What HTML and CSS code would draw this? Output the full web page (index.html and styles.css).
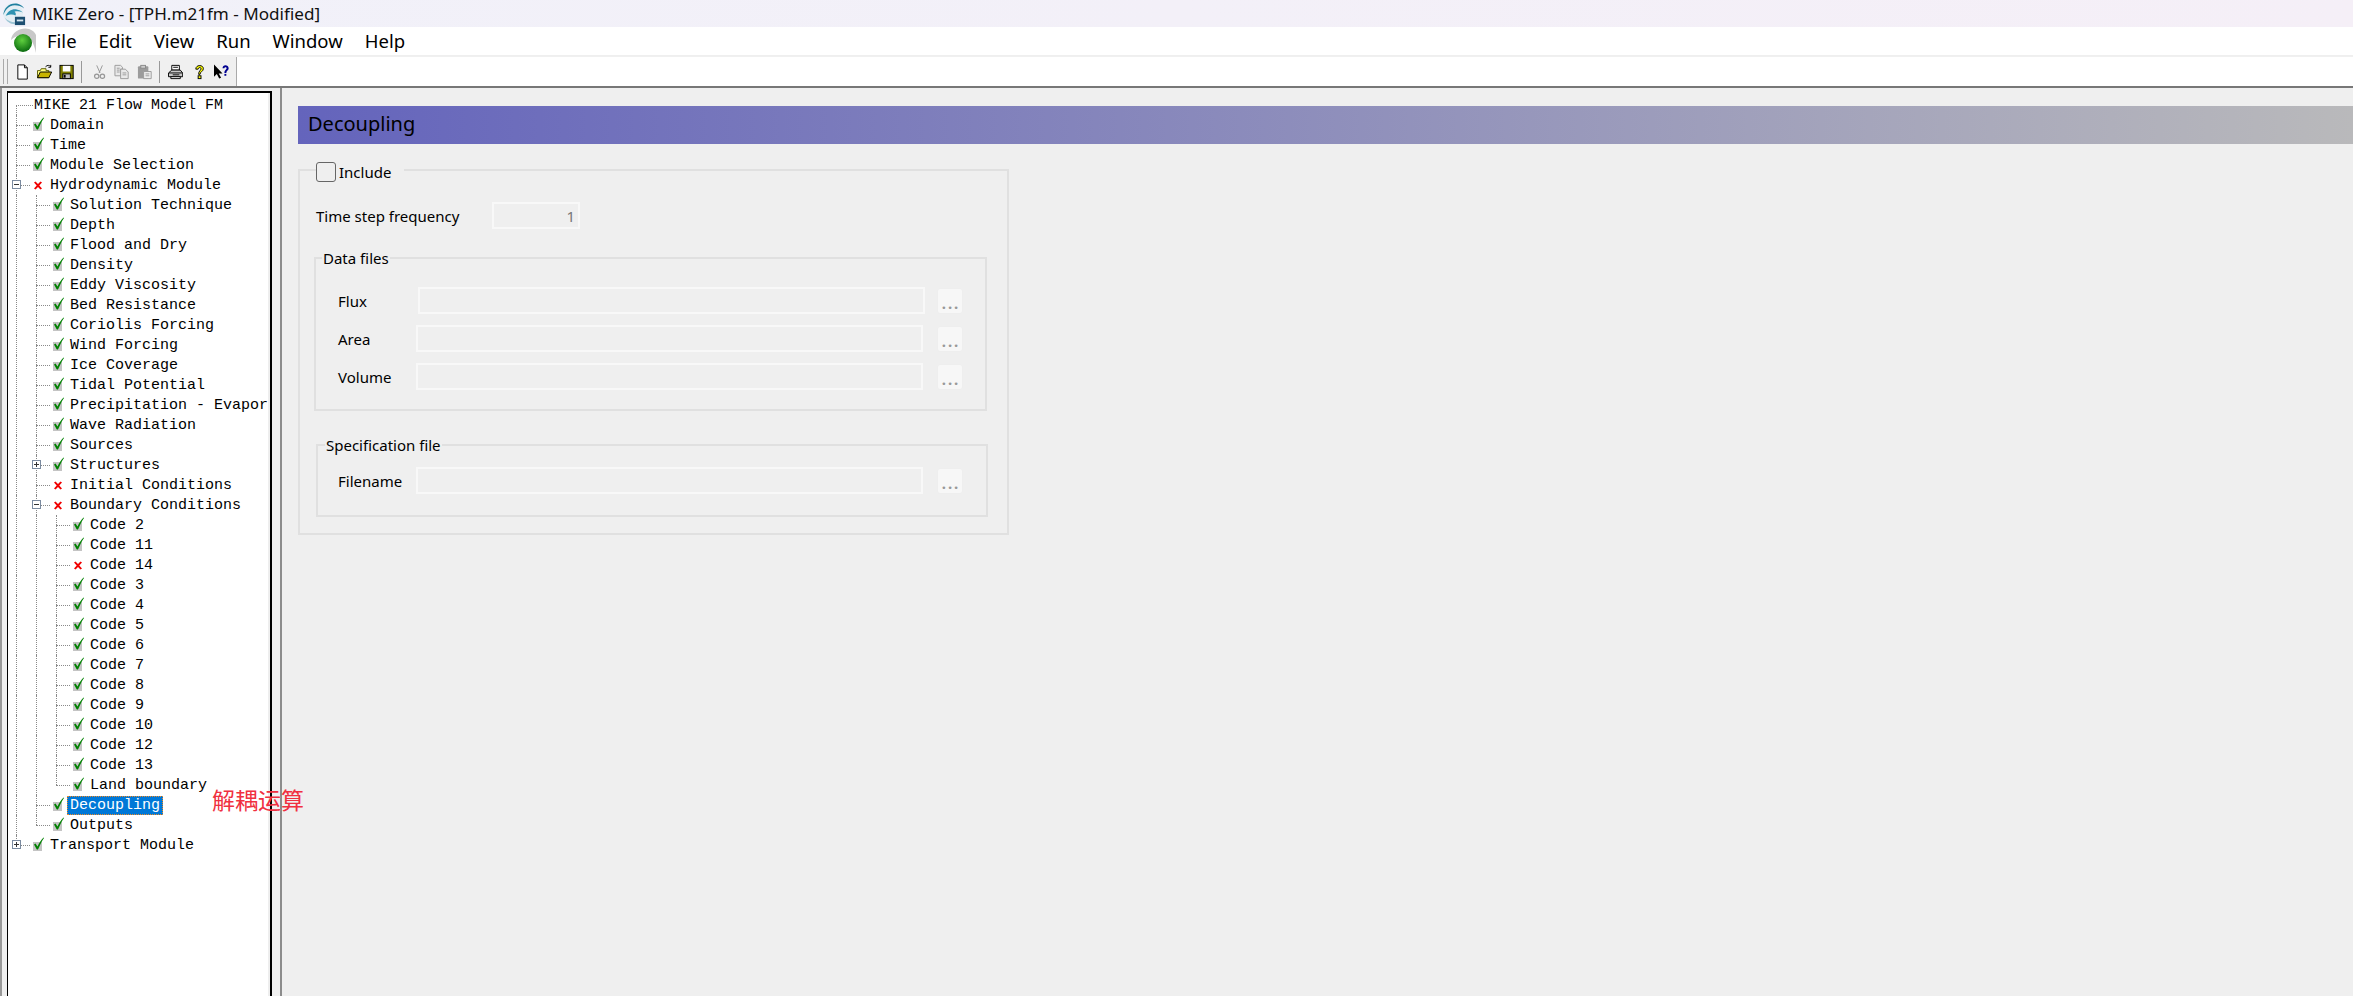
FILE: index.html
```html
<!DOCTYPE html>
<html lang="en">
<head>
    <meta charset="UTF-8">
    <title>MIKE Zero - [TPH.m21fm - Modified]</title>
    <link rel="stylesheet" href="styles.css">
</head>
<body>
    <svg class="defs" width="0" height="0">
        <symbol id="ok" viewBox="0 0 14 14">
            <rect x="0" y="5" width="9" height="9" fill="#c4c4c4"/>
            <path d="M1 7.500l1.500-1 2 3C6 6 8 3 10.500 .5l.5 .6C9 4 7 8 5 12.500H3.800z" fill="#008000"/>
        </symbol>
        <symbol id="bad" viewBox="0 0 14 14">
            <path d="M1 5l1.500-1 2.500 2.500L7.500 4 9 5 6.300 8 9 11l-1.500 1L5 9.500 2.500 12 1 11l2.700-3z" fill="#f00000" transform="translate(0 .6)"/>
        </symbol>
    </svg>
    <div class="app">
        <div class="titlebar">
            <svg class="app-logo" viewBox="0 0 26 26">
                <circle cx="12" cy="12" r="11" fill="#e4eef4"/>
                <path d="M1.500 14C2 6 9 .500 17 2c3 .6 5.500 2.500 7 5-4-3-10-4.500-15-2.500C5.500 6 3 10 1.500 14z" fill="#1f7f9f"/>
                <path d="M4 15c2-5 7-8 12-7 2.500 .5 5 1.500 6.500 3.500-3-1.500-6-2-9-1 1.500 1 2 2.500 1 4-2-1.500-6-1.500-10.500 .5z" fill="#2e92b2"/>
                <path d="M3 17c3 3 7 5 11 5v2C9 24 5 21 3 17z" fill="#9cc4d4"/>
                <rect x="14" y="16" width="11" height="9" fill="#1d4f72"/>
                <rect x="16" y="19" width="7" height="2" fill="#d8e6ee"/>
            </svg>
            <span>MIKE Zero - [TPH.m21fm - Modified]</span>
        </div>
        <div class="menubar">
            <svg class="menu-logo" viewBox="0 0 26 26">
                <defs>
                    <radialGradient id="ball" cx="45%" cy="35%" r="65%">
                        <stop offset="0" stop-color="#5fd03f"/>
                        <stop offset="1" stop-color="#0b6b10"/>
                    </radialGradient>
                </defs>
                <path d="M1 13C2 4 12 0 19 2c3 1 6 3 7 6v18c-2-10-6-18-14-18-4 0-8 2-11 5z" fill="#c8c8c8"/>
                <circle cx="13" cy="16" r="9" fill="url(#ball)"/>
            </svg>
            <span>File</span>
            <span>Edit</span>
            <span>View</span>
            <span>Run</span>
            <span>Window</span>
            <span>Help</span>
        </div>
        <div class="toolbar-row">
            <div class="toolbar">
                <span class="grip"></span>
                <svg class="tool" viewBox="0 0 16 16"><path d="M3 .5h7l3 3v12H3z" fill="#fff" stroke="#000"/><path d="M10 .5v3h3" fill="none" stroke="#000"/></svg>
                <svg class="tool" viewBox="0 0 16 16"><path d="M.5 6.500h3l1-2h5v2h3V14H.5z" fill="#ffff80" stroke="#5a5a00"/><path d="M.5 14l3-6h12l-3 6z" fill="#c8b400" stroke="#000"/><path d="M9 2.500c2-2 4-2 5.500 0M14.500 .5v2.500h-2.500" fill="none" stroke="#000"/></svg>
                <svg class="tool" viewBox="0 0 16 16"><rect x="1" y="1" width="14" height="14" fill="#808000" stroke="#000"/><rect x="4" y="1.500" width="8" height="6" fill="#fff"/><rect x="4" y="10" width="8" height="5" fill="#c0c0c0" stroke="#000"/><rect x="5" y="11" width="2" height="3" fill="#000"/></svg>
                <span class="sep"></span>
                <svg class="tool dim" viewBox="0 0 16 16"><path d="M5 1l3.500 8M11 1L7.500 9" fill="none" stroke="#888"/><circle cx="5" cy="12.500" r="2.300" fill="none" stroke="#888" stroke-width="1.300"/><circle cx="11" cy="12.500" r="2.300" fill="none" stroke="#888" stroke-width="1.300"/></svg>
                <svg class="tool dim" viewBox="0 0 16 16"><path d="M1 1h6l2 2v2h-2v7H1z" fill="#e8e8e8" stroke="#8e8e8e"/><path d="M7 5h5l3 3v7H7z" fill="#e8e8e8" stroke="#8e8e8e"/><path d="M9 9h4M9 11h4M3 4h3M3 6h3M3 8h3" stroke="#8e8e8e"/></svg>
                <svg class="tool dim" viewBox="0 0 16 16"><rect x="1" y="2" width="11" height="13" rx="1" fill="#8e8e8e"/><rect x="4" y="1" width="5" height="3" fill="#c8c8c8" stroke="#777"/><path d="M7 7.500h8V15H7z" fill="#eee" stroke="#8e8e8e"/><path d="M9 10h4M9 12h4" stroke="#8e8e8e"/></svg>
                <span class="sep narrow"></span>
                <svg class="tool wide" viewBox="0 0 16 16"><path d="M4 1h8v5H4z" fill="#fff" stroke="#000"/><path d="M.5 9L4 6h9l2.500 3v4h-15z" fill="#c8c8c8" stroke="#000"/><path d="M1 9h14" stroke="#000"/><path d="M3 13h10v2H3zM5.500 3h5M5 11h7" fill="#fff" stroke="#000"/></svg>
                <svg class="tool" viewBox="0 0 16 16"><path d="M4 5c0-5 8-5 8-.5 0 3-3.500 3-3.500 6H7c0-4 2.500-4 2.500-6 0-1.800-3-1.500-3 .5z" fill="#ffff00" stroke="#000"/><rect x="6.500" y="12" width="3" height="3" fill="#ffff00" stroke="#000"/></svg>
                <svg class="tool" viewBox="0 0 16 16"><path d="M0 0v13l3-3 2.500 5 2-1-2.500-4.500H9z" fill="#000"/><path d="M9 4c0-4.500 6.500-4 6.500 0 0 2.500-2.500 2.500-2.500 5h-2c0-3.500 2.300-3.500 2.300-5 0-1.500-2.300-1.500-2.300 0z" fill="#000090"/><rect x="11" y="10" width="2" height="2" fill="#000090"/></svg>
            </div>
        </div>
        <div class="workspace">
            <div class="tree-pane">
                <div class="tree">
                    <div class="row"><span class="branch first"></span><span class="label root">MIKE 21 Flow Model FM</span></div>
                    <div class="row"><span class="branch"></span><svg class="state"><use href="#ok"/></svg><span class="label">Domain</span></div>
                    <div class="row"><span class="branch"></span><svg class="state"><use href="#ok"/></svg><span class="label">Time</span></div>
                    <div class="row"><span class="branch"></span><svg class="state"><use href="#ok"/></svg><span class="label">Module Selection</span></div>
                    <div class="row"><span class="branch"><span class="toggle minus"></span></span><svg class="state"><use href="#bad"/></svg><span class="label">Hydrodynamic Module</span></div>
                    <div class="row"><span class="pipe"></span><span class="branch"></span><svg class="state"><use href="#ok"/></svg><span class="label">Solution Technique</span></div>
                    <div class="row"><span class="pipe"></span><span class="branch"></span><svg class="state"><use href="#ok"/></svg><span class="label">Depth</span></div>
                    <div class="row"><span class="pipe"></span><span class="branch"></span><svg class="state"><use href="#ok"/></svg><span class="label">Flood and Dry</span></div>
                    <div class="row"><span class="pipe"></span><span class="branch"></span><svg class="state"><use href="#ok"/></svg><span class="label">Density</span></div>
                    <div class="row"><span class="pipe"></span><span class="branch"></span><svg class="state"><use href="#ok"/></svg><span class="label">Eddy Viscosity</span></div>
                    <div class="row"><span class="pipe"></span><span class="branch"></span><svg class="state"><use href="#ok"/></svg><span class="label">Bed Resistance</span></div>
                    <div class="row"><span class="pipe"></span><span class="branch"></span><svg class="state"><use href="#ok"/></svg><span class="label">Coriolis Forcing</span></div>
                    <div class="row"><span class="pipe"></span><span class="branch"></span><svg class="state"><use href="#ok"/></svg><span class="label">Wind Forcing</span></div>
                    <div class="row"><span class="pipe"></span><span class="branch"></span><svg class="state"><use href="#ok"/></svg><span class="label">Ice Coverage</span></div>
                    <div class="row"><span class="pipe"></span><span class="branch"></span><svg class="state"><use href="#ok"/></svg><span class="label">Tidal Potential</span></div>
                    <div class="row"><span class="pipe"></span><span class="branch"></span><svg class="state"><use href="#ok"/></svg><span class="label">Precipitation - Evapor</span></div>
                    <div class="row"><span class="pipe"></span><span class="branch"></span><svg class="state"><use href="#ok"/></svg><span class="label">Wave Radiation</span></div>
                    <div class="row"><span class="pipe"></span><span class="branch"></span><svg class="state"><use href="#ok"/></svg><span class="label">Sources</span></div>
                    <div class="row"><span class="pipe"></span><span class="branch"><span class="toggle plus"></span></span><svg class="state"><use href="#ok"/></svg><span class="label">Structures</span></div>
                    <div class="row"><span class="pipe"></span><span class="branch"></span><svg class="state"><use href="#bad"/></svg><span class="label">Initial Conditions</span></div>
                    <div class="row"><span class="pipe"></span><span class="branch"><span class="toggle minus"></span></span><svg class="state"><use href="#bad"/></svg><span class="label">Boundary Conditions</span></div>
                    <div class="row"><span class="pipe"></span><span class="pipe"></span><span class="branch"></span><svg class="state"><use href="#ok"/></svg><span class="label">Code 2</span></div>
                    <div class="row"><span class="pipe"></span><span class="pipe"></span><span class="branch"></span><svg class="state"><use href="#ok"/></svg><span class="label">Code 11</span></div>
                    <div class="row"><span class="pipe"></span><span class="pipe"></span><span class="branch"></span><svg class="state"><use href="#bad"/></svg><span class="label">Code 14</span></div>
                    <div class="row"><span class="pipe"></span><span class="pipe"></span><span class="branch"></span><svg class="state"><use href="#ok"/></svg><span class="label">Code 3</span></div>
                    <div class="row"><span class="pipe"></span><span class="pipe"></span><span class="branch"></span><svg class="state"><use href="#ok"/></svg><span class="label">Code 4</span></div>
                    <div class="row"><span class="pipe"></span><span class="pipe"></span><span class="branch"></span><svg class="state"><use href="#ok"/></svg><span class="label">Code 5</span></div>
                    <div class="row"><span class="pipe"></span><span class="pipe"></span><span class="branch"></span><svg class="state"><use href="#ok"/></svg><span class="label">Code 6</span></div>
                    <div class="row"><span class="pipe"></span><span class="pipe"></span><span class="branch"></span><svg class="state"><use href="#ok"/></svg><span class="label">Code 7</span></div>
                    <div class="row"><span class="pipe"></span><span class="pipe"></span><span class="branch"></span><svg class="state"><use href="#ok"/></svg><span class="label">Code 8</span></div>
                    <div class="row"><span class="pipe"></span><span class="pipe"></span><span class="branch"></span><svg class="state"><use href="#ok"/></svg><span class="label">Code 9</span></div>
                    <div class="row"><span class="pipe"></span><span class="pipe"></span><span class="branch"></span><svg class="state"><use href="#ok"/></svg><span class="label">Code 10</span></div>
                    <div class="row"><span class="pipe"></span><span class="pipe"></span><span class="branch"></span><svg class="state"><use href="#ok"/></svg><span class="label">Code 12</span></div>
                    <div class="row"><span class="pipe"></span><span class="pipe"></span><span class="branch"></span><svg class="state"><use href="#ok"/></svg><span class="label">Code 13</span></div>
                    <div class="row"><span class="pipe"></span><span class="pipe"></span><span class="branch last"></span><svg class="state"><use href="#ok"/></svg><span class="label">Land boundary</span></div>
                    <div class="row"><span class="pipe"></span><span class="branch"></span><svg class="state"><use href="#ok"/></svg><span class="label selected">Decoupling</span><span class="note">解耦运算</span></div>
                    <div class="row"><span class="pipe"></span><span class="branch last"></span><svg class="state"><use href="#ok"/></svg><span class="label">Outputs</span></div>
                    <div class="row"><span class="branch last"><span class="toggle plus"></span></span><svg class="state"><use href="#ok"/></svg><span class="label">Transport Module</span></div>
                </div>
            </div>
            <div class="main">
                <div class="page-title">Decoupling</div>
                <fieldset class="group outer">
                    <legend class="include"><input type="checkbox" class="check"><span>Include</span></legend>
                    <div class="freq-row">
                        <label>Time step frequency</label>
                        <input class="field number" value="1" disabled>
                    </div>
                    <fieldset class="group data-files">
                        <legend>Data files</legend>
                        <div class="file-row">
                            <label>Flux</label>
                            <input class="field nudge" disabled>
                            <button class="browse" disabled>...</button>
                        </div>
                        <div class="file-row">
                            <label>Area</label>
                            <input class="field" disabled>
                            <button class="browse" disabled>...</button>
                        </div>
                        <div class="file-row">
                            <label>Volume</label>
                            <input class="field" disabled>
                            <button class="browse" disabled>...</button>
                        </div>
                    </fieldset>
                    <fieldset class="group spec-file">
                        <legend>Specification file</legend>
                        <div class="file-row">
                            <label>Filename</label>
                            <input class="field" disabled>
                            <button class="browse" disabled>...</button>
                        </div>
                    </fieldset>
                </fieldset>
            </div>
        </div>
    </div>
</body>
</html>
```

FILE: styles.css
```css
* {
    box-sizing: border-box;
}
body {
    margin: 0;
    font-family: "Noto Sans", sans-serif;
    background-color: #efefef;
    color: #000;
    overflow: hidden;
}
.defs {
    display: block;
    height: 0;
}
.app {
    display: flex;
    flex-direction: column;
    height: 100vh;
}

/* window chrome */
.titlebar {
    display: flex;
    align-items: center;
    gap: 6px;
    height: 27px;
    padding-left: 2px;
    font-size: 17.1px;
    color: #111;
    background: linear-gradient(to right, #f1f1f9, #f5eff7);
}
.app-logo {
    width: 24px;
    height: 24px;
}
.menubar {
    display: flex;
    align-items: center;
    gap: 22px;
    height: 28px;
    padding: 0 0 2px 10px;
    font-size: 18.5px;
    background: white;
}
.menu-logo {
    width: 26px;
    height: 26px;
    margin-right: -11px;
}
.toolbar-row {
    height: 31px;
    margin-top: 2px;
    background: white;
    border-bottom: 2px solid #777;
    box-shadow: 0 -1px 0 #f0f0f0;
}
.toolbar {
    display: flex;
    align-items: center;
    width: 237px;
    height: 29px;
    padding-left: 3px;
    background: #f0f0f0;
    border-right: 1px solid #aaa;
}
.grip {
    width: 5px;
    height: 25px;
    margin-right: 7px;
    border-left: 1px solid #aaa;
    border-right: 1px solid #aaa;
}
.tool {
    width: 16px;
    height: 16px;
    margin-right: 7px;
}
.tool.wide {
    margin-right: 9px;
}
.dim {
    opacity: .85;
}
.sep {
    width: 1px;
    height: 22px;
    margin-right: 10px;
    background: #999;
}
.sep.narrow {
    margin-right: 8px;
}

/* tree */
.workspace {
    flex: 1;
    display: flex;
    min-height: 0;
}
.tree-pane {
    width: 280px;
    padding: 3px 8px 0 7px;
    background: #f0f0f0;
    box-shadow: inset 2px 0 0 #999;
}
.tree {
    height: 100%;
    padding: 2px 0 0 8px;
    background: white;
    border: solid #000;
    border-width: 2px 2px 0 1px;
    box-shadow: inset -2px 0 0 #eee;
    font-family: "Liberation Mono", monospace;
    font-size: 15px;
}
.row {
    position: relative;
    display: flex;
    align-items: center;
    height: 20px;
    white-space: nowrap;
}
.pipe {
    width: 20px;
    height: 20px;
    flex: none;
    border-left: 1px dotted #8a8a8a;
}
.branch {
    position: relative;
    width: 17px;
    height: 20px;
    flex: none;
}
.branch::before {
    content: "";
    position: absolute;
    left: 0;
    top: 0;
    height: 100%;
    border-left: 1px dotted #8a8a8a;
}
.branch.first::before {
    top: 50%;
    height: 50%;
}
.branch.last::before {
    height: 50%;
}
.branch::after {
    content: "";
    position: absolute;
    left: 0;
    top: 50%;
    width: 14px;
    border-top: 1px dotted #8a8a8a;
}
.row:first-child .branch::after {
    width: 17px;
}
.toggle {
    position: absolute;
    z-index: 1;
    left: -4px;
    top: 5px;
    width: 9px;
    height: 9px;
    background: white;
    border: 1px solid #7b8ba0;
}
.toggle::before {
    content: "";
    position: absolute;
    left: 1px;
    top: 3px;
    width: 5px;
    height: 1px;
    background: #333;
}
.plus::after {
    content: "";
    position: absolute;
    left: 3px;
    top: 1px;
    width: 1px;
    height: 5px;
    background: #333;
}
.state {
    width: 14px;
    height: 14px;
    flex: none;
    margin-top: -3px;
}
.label {
    padding: 0 3px;
    line-height: 19px;
    height: 19px;
    margin-top: 1px;
}
.label.root {
    margin-left: -2px;
}
.label.selected {
    color: white;
    background: #0078d7;
    outline: 1px dotted #f08a24;
    outline-offset: -1px;
}
.note {
    position: absolute;
    left: 196px;
    top: -11px;
    font-family: "Noto Sans CJK SC", sans-serif;
    font-size: 23px;
    line-height: 30px;
    color: #f03040;
}

/* form side */
.main {
    flex: 1;
    padding: 18px 0 0 16px;
    border-left: 2px solid #8c8c8c;
    min-width: 0;
}
.page-title {
    height: 38px;
    padding-left: 10px;
    line-height: 36px;
    font-size: 20px;
    background: linear-gradient(to right, #6464bc, #b9b9bb);
}
.group {
    margin: 0;
    min-width: 0;
    border: 2px solid #e0e0e0;
    font-size: 15px;
}
.group legend {
    height: 20px;
    line-height: 20px;
}
.outer {
    width: 711px;
    margin-top: 14px;
    padding: 20px 16px 16px;
}
.group .include {
    display: flex;
    align-items: flex-end;
    gap: 3px;
    width: 88px;
    height: 24px;
    padding: 0;
}
.check {
    appearance: none;
    width: 20px;
    height: 20px;
    margin: 0;
    background: #efefef;
    border: 1px solid #666;
    border-radius: 3px;
}
.freq-row {
    display: flex;
    align-items: center;
}
.freq-row label {
    width: 176px;
}
.field {
    width: 507px;
    height: 27px;
    padding: 0 3px;
    background: #efefef;
    border: 2px solid #f8f8f8;
    font: inherit;
}
.field.number {
    width: 88px;
    text-align: right;
    color: #777;
}
.field.nudge {
    margin-left: 2px;
    margin-right: -2px;
}
.data-files {
    width: 673px;
    margin: 19px 0 0 -2px;
    padding: 19px 22px 19px;
}
.data-files legend {
    margin-left: -16px;
    padding: 0 1px;
}
.spec-file {
    width: 672px;
    margin: 24px 0 0;
    padding: 12px 20px 21px;
}
.spec-file legend {
    margin-left: -13px;
    padding: 0 1px;
}
.file-row {
    display: flex;
    align-items: center;
}
.file-row + .file-row {
    margin-top: 11px;
}
.file-row label {
    width: 78px;
}
.browse {
    width: 26px;
    height: 26px;
    margin-left: 14px;
    padding: 0 0 0 2px;
    background: #f7f7f7;
    border: 1px solid #eee;
    border-radius: 3px;
    font: inherit;
    font-weight: bold;
    letter-spacing: 2px;
    line-height: 28px;
    color: #999;
}
```
